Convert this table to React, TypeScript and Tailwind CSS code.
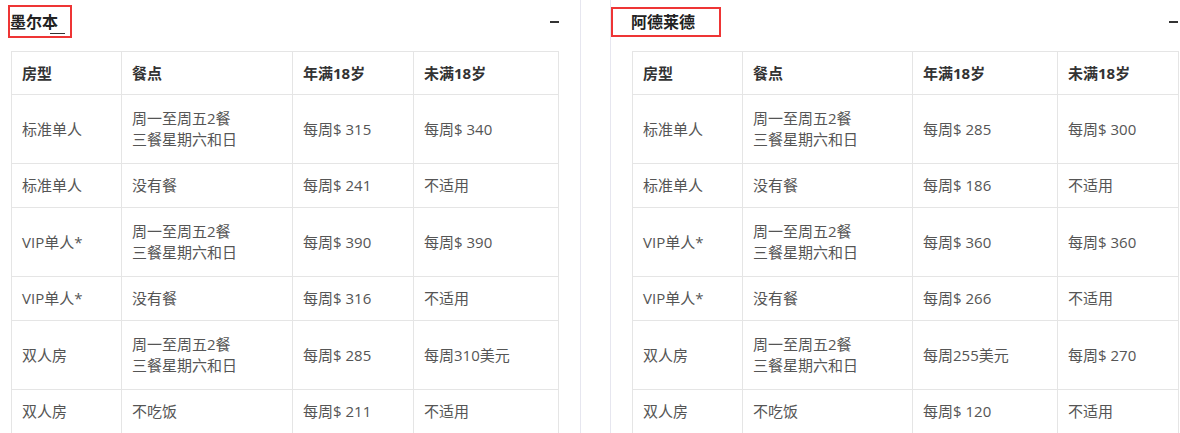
import { FC } from "react";

type Row = { room: string; meal: string[]; adult: string; minor: string };

const mealFull = ["周一至周五2餐", "三餐星期六和日"];

const melbourne: Row[] = [
  { room: "标准单人", meal: mealFull, adult: "每周$ 315", minor: "每周$ 340" },
  { room: "标准单人", meal: ["没有餐"], adult: "每周$ 241", minor: "不适用" },
  { room: "VIP单人*", meal: mealFull, adult: "每周$ 390", minor: "每周$ 390" },
  { room: "VIP单人*", meal: ["没有餐"], adult: "每周$ 316", minor: "不适用" },
  { room: "双人房", meal: mealFull, adult: "每周$ 285", minor: "每周310美元" },
  { room: "双人房", meal: ["不吃饭"], adult: "每周$ 211", minor: "不适用" },
];

const adelaide: Row[] = [
  { room: "标准单人", meal: mealFull, adult: "每周$ 285", minor: "每周$ 300" },
  { room: "标准单人", meal: ["没有餐"], adult: "每周$ 186", minor: "不适用" },
  { room: "VIP单人*", meal: mealFull, adult: "每周$ 360", minor: "每周$ 360" },
  { room: "VIP单人*", meal: ["没有餐"], adult: "每周$ 266", minor: "不适用" },
  { room: "双人房", meal: mealFull, adult: "每周255美元", minor: "每周$ 270" },
  { room: "双人房", meal: ["不吃饭"], adult: "每周$ 120", minor: "不适用" },
];

const font = "font-['Open_Sans','Noto_Sans_CJK_SC',sans-serif]";

interface PriceTableProps {
  rows: Row[];
  widths: string[];
  width: string;
}

const PriceTable: FC<PriceTableProps> = ({ rows, widths, width }) => {
  const heads = ["房型", "餐点", "年满18岁", "未满18岁"];
  return (
    <table className={`${width} table-fixed border-collapse text-[15px]`}>
      <colgroup>
        {widths.map((w, i) => (
          <col key={i} className={w} />
        ))}
      </colgroup>
      <thead>
        <tr className="h-[43px]">
          {heads.map((h) => (
            <th
              key={h}
              className="border border-[#e5e5e5] pl-[10px] text-left align-middle font-bold text-[#333]"
            >
              {h}
            </th>
          ))}
        </tr>
      </thead>
      <tbody>
        {rows.map((r, i) => (
          <tr key={i} className={r.meal.length > 1 ? "h-[69px]" : "h-[44px]"}>
            <td className="border border-[#e5e5e5] pl-[10px] align-middle text-[#555]">{r.room}</td>
            <td className="border border-[#e5e5e5] pl-[10px] align-middle leading-[21px] text-[#555]">
              {r.meal.map((m) => (
                <div key={m}>{m}</div>
              ))}
            </td>
            <td className="border border-[#e5e5e5] pl-[10px] align-middle text-[#555]">{r.adult}</td>
            <td className="border border-[#e5e5e5] pl-[10px] align-middle text-[#555]">{r.minor}</td>
          </tr>
        ))}
      </tbody>
    </table>
  );
};

const Minus = () => <span className="block h-[2px] w-[9px] bg-[#333]" />;

const App: FC = () => {
  return (
    <div className={`flex h-[433px] w-[1180px] overflow-hidden bg-white ${font}`}>
      {/* 墨尔本 */}
      <div className="w-[581px] shrink-0 border-r border-[#e6e6ef] pl-[11px]">
        <div className="flex h-[51px] items-start justify-between pr-[21px]">
          <div className="relative -ml-[3px] mt-[5px] flex h-[33px] w-[64px] items-center border-2 border-[#ee3535] text-[16px] font-bold text-[#222]">
            墨尔本
            <span className="absolute left-[40px] top-[26px] h-[1px] w-[15px] bg-[#333]" />
          </div>
          <div className="mt-[21px]">
            <Minus />
          </div>
        </div>
        <PriceTable
          rows={melbourne}
          width="w-[547px]"
          widths={["w-[110px]", "w-[171px]", "w-[121px]", "w-[145px]"]}
        />
      </div>

      <div className="w-[29px] shrink-0" />

      {/* 阿德莱德 */}
      <div className="flex-1 border-l border-[#e6e6ef]">
        <div className="flex h-[51px] items-start justify-between pr-[2px]">
          <div className="mt-[7px] flex h-[30px] w-[110px] items-center border-2 border-[#ee3535] pl-[18px] text-[16px] font-bold text-[#222]">
            阿德莱德
          </div>
          <div className="mt-[21px]">
            <Minus />
          </div>
        </div>
        <div className="pl-[21px]">
          <PriceTable
            rows={adelaide}
            width="w-[546px]"
            widths={["w-[110px]", "w-[170px]", "w-[145px]", "w-[121px]"]}
          />
        </div>
      </div>
    </div>
  );
};

export default App;
